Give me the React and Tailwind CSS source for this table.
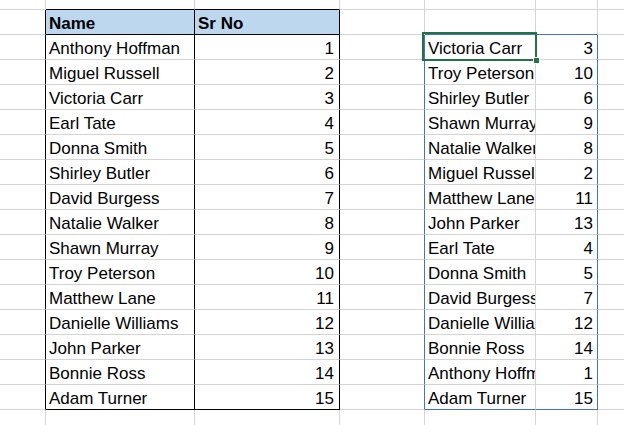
import clsx from 'clsx'

const left = [
  ['Anthony Hoffman', 1],
  ['Miguel Russell', 2],
  ['Victoria Carr', 3],
  ['Earl Tate', 4],
  ['Donna Smith', 5],
  ['Shirley Butler', 6],
  ['David Burgess', 7],
  ['Natalie Walker', 8],
  ['Shawn Murray', 9],
  ['Troy Peterson', 10],
  ['Matthew Lane', 11],
  ['Danielle Williams', 12],
  ['John Parker', 13],
  ['Bonnie Ross', 14],
  ['Adam Turner', 15],
]

const right = [
  ['Victoria Carr', 3],
  ['Troy Peterson', 10],
  ['Shirley Butler', 6],
  ['Shawn Murray', 9],
  ['Natalie Walker', 8],
  ['Miguel Russell', 2],
  ['Matthew Lane', 11],
  ['John Parker', 13],
  ['Earl Tate', 4],
  ['Donna Smith', 5],
  ['David Burgess', 7],
  ['Danielle Williams', 12],
  ['Bonnie Ross', 14],
  ['Anthony Hoffman', 1],
  ['Adam Turner', 15],
]

const cell =
  'border-r border-b border-[#d4d4d4] overflow-hidden whitespace-nowrap text-[17px] leading-[22px] pt-[3px] text-black'

export default function App() {
  const rows = []

  // row 0: thin strip above the tables
  rows.push(
    <div key="r0" className="contents">
      <div className={cell} />
      <div className={clsx(cell, 'border-b-black')} />
      <div className={clsx(cell, 'border-b-black')} />
      <div className={cell} />
      <div className={cell} />
      <div className={cell} />
      <div className={cell} />
    </div>
  )

  // header row
  rows.push(
    <div key="hd" className="contents">
      <div className={clsx(cell, 'border-r-black')} />
      <div className={clsx(cell, 'bg-[#bdd7ee] border-r-black border-b-black pl-[3px] font-bold')}>Name</div>
      <div className={clsx(cell, 'bg-[#bdd7ee] border-r-black border-b-black pl-[3px] font-bold')}>Sr No</div>
      <div className={cell} />
      <div className={clsx(cell, 'border-b-[#4472c4]')} />
      <div className={clsx(cell, 'border-b-[#4472c4]')} />
      <div className={cell} />
    </div>
  )

  for (let i = 0; i < 15; i++) {
    const last = i === 14
    rows.push(
      <div key={i} className="contents">
        <div className={clsx(cell, 'border-r-black')} />
        <div className={clsx(cell, 'border-r-black pl-[3px]', last && 'border-b-black')}>{left[i][0]}</div>
        <div className={clsx(cell, 'border-r-black pr-[5px] text-right', last && 'border-b-black')}>{left[i][1]}</div>
        <div className={clsx(cell, 'border-r-[#4472c4]')} />
        <div className={clsx(cell, 'pl-[3px]', last && 'border-b-[#4472c4]')}>{right[i][0]}</div>
        <div className={clsx(cell, 'border-r-[#4472c4] pr-[4px] text-right', last && 'border-b-[#4472c4]')}>{right[i][1]}</div>
        <div className={cell} />
      </div>
    )
  }

  // partial row at the bottom
  rows.push(
    <div key="end" className="contents">
      {[0, 1, 2, 3, 4, 5, 6].map((c) => (
        <div key={c} className={cell} />
      ))}
    </div>
  )

  return (
    <div
      className="relative w-[624px] h-[425px] overflow-hidden bg-white"
      style={{ fontFamily: '"Liberation Sans", Arial, sans-serif' }}
    >
      <div className="grid grid-cols-[46px_149px_145px_85px_111px_62px_80px] grid-rows-[10px_repeat(17,25px)]">
        {rows}
      </div>

      {/* active cell outline + fill handle */}
      <div className="absolute left-[422px] top-[32px] w-[115px] h-[29px] border-2 border-[#217346]" />
      <div className="absolute left-[533px] top-[57px] w-[7px] h-[7px] bg-[#217346] border border-white" />
    </div>
  )
}
